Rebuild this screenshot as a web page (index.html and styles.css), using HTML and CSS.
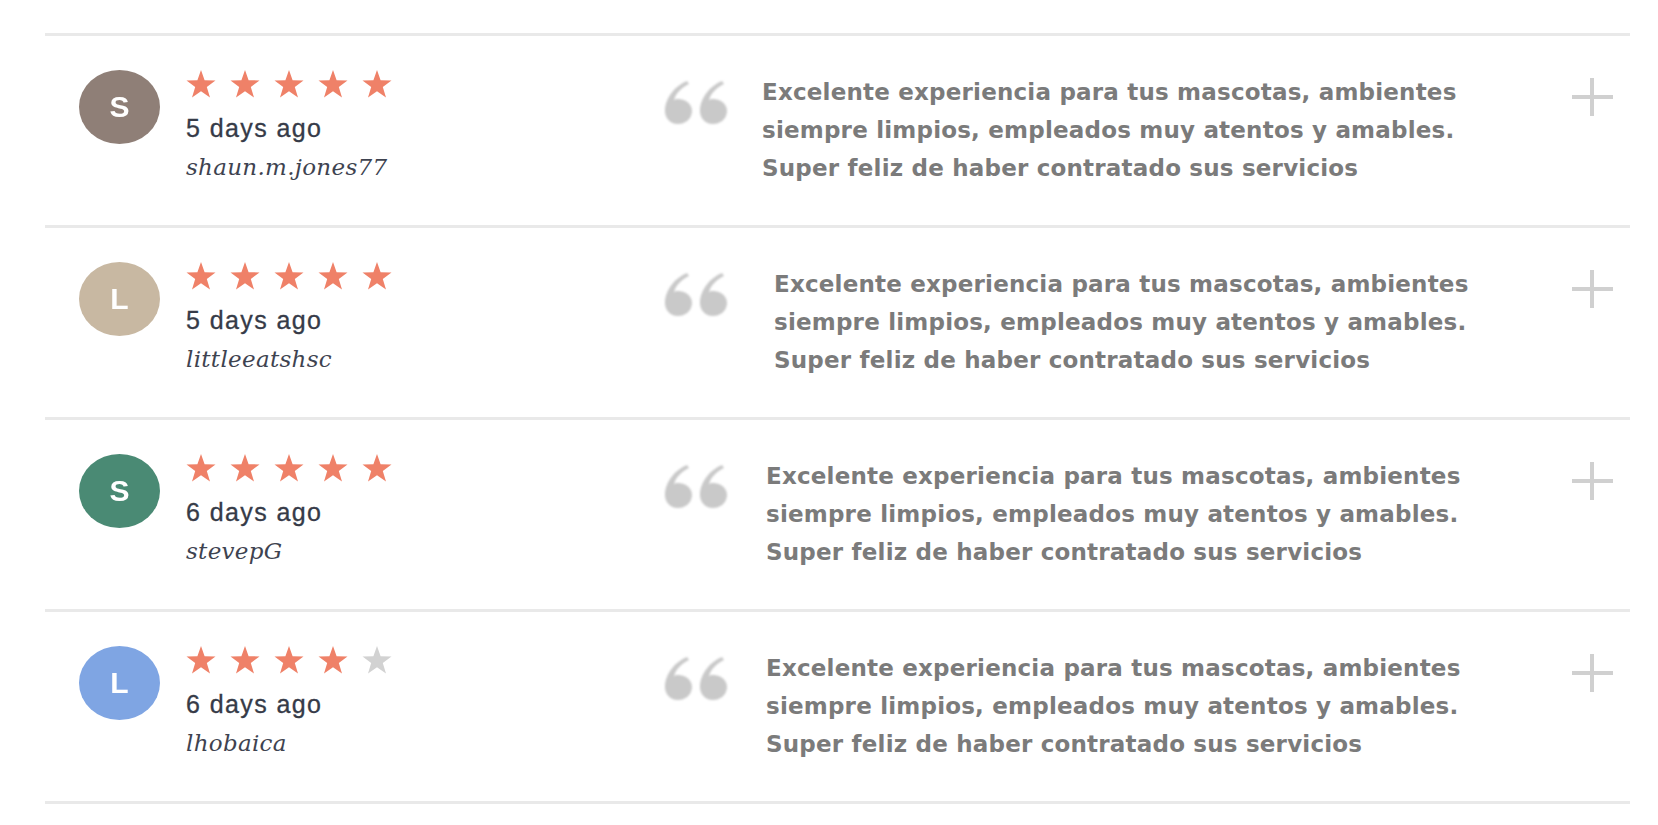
FILE: index.html
```html
<!DOCTYPE html>
<html lang="es">
<head>
<meta charset="utf-8">
<title>Reseñas</title>
<link rel="stylesheet" href="styles.css">
</head>
<body>
<svg class="defs" width="0" height="0" aria-hidden="true">
  <defs>
    <symbol id="star" viewBox="0 0 30 28">
      <polygon points="15,0 18.6,10.2 29.5,10.4 20.8,17 24,27.5 15,21.2 6,27.5 9.2,17 0.5,10.4 11.4,10.2"/>
    </symbol>
    <symbol id="qmark" viewBox="0 0 30 44">
      <path d="M24 1 C12 6 4 16 2 28 C1 38 7 44 15 44 C23 44 29 38 29 31 C29 24 23 19 15 19 C13 19 12 19.5 11 20 C13 13 18 8 26 4 Z"/>
    </symbol>
  </defs>
</svg>
<main class="reviews">
  <article class="review">
    <div class="avatar av-brown">S</div>
    <div class="meta">
      <div class="stars">
        <svg class="star on"><use href="#star"/></svg><svg class="star on"><use href="#star"/></svg><svg class="star on"><use href="#star"/></svg><svg class="star on"><use href="#star"/></svg><svg class="star on"><use href="#star"/></svg>
      </div>
      <div class="date">5 days ago</div>
      <div class="user">shaun.m.jones77</div>
    </div>
    <svg class="quote" viewBox="0 0 65 44"><use href="#qmark" x="0" width="30" height="44"/><use href="#qmark" x="35" width="30" height="44"/></svg>
    <p class="text">Excelente experiencia para tus mascotas, ambientes<br>siempre limpios, empleados muy atentos y amables.<br>Super feliz de haber contratado sus servicios</p>
    <span class="plus" aria-label="expand"></span>
  </article>
  <article class="review">
    <div class="avatar av-beige">L</div>
    <div class="meta">
      <div class="stars">
        <svg class="star on"><use href="#star"/></svg><svg class="star on"><use href="#star"/></svg><svg class="star on"><use href="#star"/></svg><svg class="star on"><use href="#star"/></svg><svg class="star on"><use href="#star"/></svg>
      </div>
      <div class="date">5 days ago</div>
      <div class="user">littleeatshsc</div>
    </div>
    <svg class="quote" viewBox="0 0 65 44"><use href="#qmark" x="0" width="30" height="44"/><use href="#qmark" x="35" width="30" height="44"/></svg>
    <p class="text shift-2">Excelente experiencia para tus mascotas, ambientes<br>siempre limpios, empleados muy atentos y amables.<br>Super feliz de haber contratado sus servicios</p>
    <span class="plus" aria-label="expand"></span>
  </article>
  <article class="review">
    <div class="avatar av-green">S</div>
    <div class="meta">
      <div class="stars">
        <svg class="star on"><use href="#star"/></svg><svg class="star on"><use href="#star"/></svg><svg class="star on"><use href="#star"/></svg><svg class="star on"><use href="#star"/></svg><svg class="star on"><use href="#star"/></svg>
      </div>
      <div class="date">6 days ago</div>
      <div class="user">stevepG</div>
    </div>
    <svg class="quote" viewBox="0 0 65 44"><use href="#qmark" x="0" width="30" height="44"/><use href="#qmark" x="35" width="30" height="44"/></svg>
    <p class="text shift-1">Excelente experiencia para tus mascotas, ambientes<br>siempre limpios, empleados muy atentos y amables.<br>Super feliz de haber contratado sus servicios</p>
    <span class="plus" aria-label="expand"></span>
  </article>
  <article class="review">
    <div class="avatar av-blue">L</div>
    <div class="meta">
      <div class="stars">
        <svg class="star on"><use href="#star"/></svg><svg class="star on"><use href="#star"/></svg><svg class="star on"><use href="#star"/></svg><svg class="star on"><use href="#star"/></svg><svg class="star off"><use href="#star"/></svg>
      </div>
      <div class="date">6 days ago</div>
      <div class="user">lhobaica</div>
    </div>
    <svg class="quote" viewBox="0 0 65 44"><use href="#qmark" x="0" width="30" height="44"/><use href="#qmark" x="35" width="30" height="44"/></svg>
    <p class="text shift-1">Excelente experiencia para tus mascotas, ambientes<br>siempre limpios, empleados muy atentos y amables.<br>Super feliz de haber contratado sus servicios</p>
    <span class="plus" aria-label="expand"></span>
  </article>
</main>
</body>
</html>
```

FILE: styles.css
```css
* { box-sizing: border-box; }
html, body { margin: 0; padding: 0; background: #ffffff; }
body { font-family: "Liberation Sans", Arial, sans-serif; }

.defs { position: absolute; width: 0; height: 0; overflow: hidden; }

.reviews {
  margin: 33px 28px 0 45px;
  border-top: 3px solid #e9e9e9;
}

.review {
  display: flex;
  align-items: flex-start;
  height: 192px;
  padding: 34px 17px 0 34px;
  border-bottom: 3px solid #e9e9e9;
}

.avatar {
  flex: 0 0 81px;
  height: 74px;
  border-radius: 50%;
  color: #fff;
  font-family: "Liberation Sans", Arial, sans-serif;
  font-weight: 700;
  font-size: 30px;
  display: flex;
  align-items: center;
  justify-content: center;
  filter: blur(0.4px);
}
.av-brown { background: #8f7f77; }
.av-beige { background: #c8b8a2; }
.av-green { background: #4a8a74; }
.av-blue  { background: #7fa5e3; }

.meta {
  flex: 0 0 477px;
  margin-left: 26px;
  display: flex;
  flex-direction: column;
}

.stars {
  display: flex;
  gap: 14px;
  height: 28px;
  margin-top: 0;
}
.star { width: 30px; height: 28px; filter: blur(0.3px); }
.star.on { fill: #ef8168; }
.star.off { fill: #d2d2d2; }

.date {
  margin-top: 16px;
  font-size: 25px;
  line-height: 28px;
  letter-spacing: 1.4px;
  color: #363b48;
  -webkit-text-stroke: 0.3px #363b48;
}

.user {
  margin-top: 11px;
  font-family: "DejaVu Serif", Georgia, serif;
  font-style: italic;
  font-size: 23px;
  line-height: 28px;
  letter-spacing: 0.3px;
  color: #3e4350;
}

.quote {
  flex: 0 0 65px;
  height: 44px;
  margin-top: 10px;
  fill: #c9c9c9;
  filter: blur(0.8px);
}

.text {
  flex: 1 1 auto;
  margin: 3px 0 0 34px;
  font-family: "Comic Sans MS", "DejaVu Sans", sans-serif;
  font-weight: 700;
  font-size: 23px;
  line-height: 38px;
  letter-spacing: 0.2px;
  color: #7b7b7b;
  white-space: nowrap;
}
.text.shift-1 { margin-left: 38px; }
.text.shift-2 { margin-left: 46px; }

.plus {
  flex: 0 0 41px;
  height: 38px;
  margin-top: 8px;
  position: relative;
}
.plus::before, .plus::after {
  content: "";
  position: absolute;
  background: #d0d0d0;
  filter: blur(0.4px);
}
.plus::before { left: 0; right: 0; top: 17px; height: 4px; }
.plus::after { top: 0; bottom: 0; left: 18px; width: 4px; }
```
